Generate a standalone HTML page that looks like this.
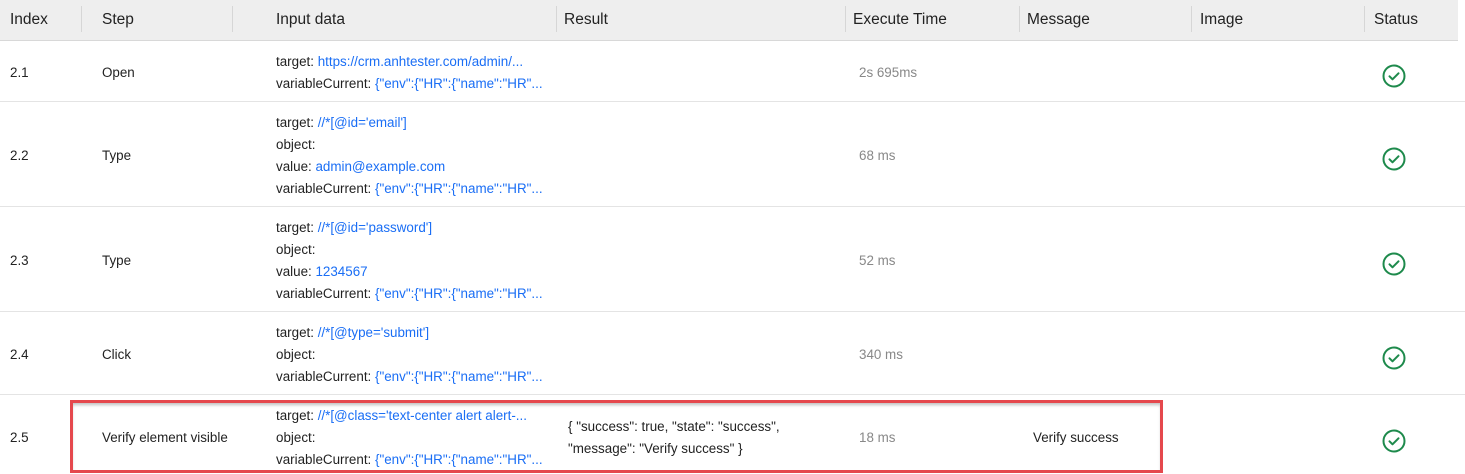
<!DOCTYPE html><html><head><style>
body{margin:0;background:#fff;font-family:"Liberation Sans",sans-serif;width:1465px;height:474px;overflow:hidden;position:relative;color:#222}
.hd{position:absolute;left:0;top:0;width:1458px;height:40px;background:#eeeeee;border-bottom:1px solid #d8d8d8}
.h{position:absolute;top:11px;font-size:15.5px;color:#222}
.sep{position:absolute;top:6px;width:1px;height:26px;background:#d6d6d6}
.line{position:absolute;left:0;width:1465px;height:1px;background:#e4e4e4}
.t{position:absolute;font-size:13.4px;color:#222;white-space:nowrap}
.b{color:#1a6ef5}
.g{color:#888}
.ic{position:absolute;left:1382px;width:24px;height:24px}
.box{position:absolute;left:70px;top:400px;width:1087px;height:67px;border:3px solid #e5484d;box-shadow:inset 0 3px 3px -1px rgba(0,0,0,.25)}
</style></head><body>
<div class="hd"></div>
<div class="h" style="left:10px">Index</div><div class="sep" style="left:81px"></div>
<div class="h" style="left:102px">Step</div><div class="sep" style="left:232px"></div>
<div class="h" style="left:276px">Input data</div><div class="sep" style="left:556px"></div>
<div class="h" style="left:564px">Result</div><div class="sep" style="left:845px"></div>
<div class="h" style="left:853px">Execute Time</div><div class="sep" style="left:1019px"></div>
<div class="h" style="left:1027px">Message</div><div class="sep" style="left:1191px"></div>
<div class="h" style="left:1200px">Image</div><div class="sep" style="left:1364px"></div>
<div class="h" style="left:1374px">Status</div>
<div class="line" style="top:101px"></div><div class="line" style="top:206px"></div><div class="line" style="top:311px"></div><div class="line" style="top:394px"></div>

<div class="t" style="left:10px;top:65px">2.1</div><div class="t" style="left:102px;top:65px">Open</div>
<div class="t" style="left:276px;top:54px">target: <span class="b">https://crm.anhtester.com/admin/...</span></div>
<div class="t" style="left:276px;top:76px">variableCurrent: <span class="b">{"env":{"HR":{"name":"HR"...</span></div>
<div class="t g" style="left:859px;top:65px">2s 695ms</div>

<div class="t" style="left:10px;top:148px">2.2</div><div class="t" style="left:102px;top:148px">Type</div>
<div class="t" style="left:276px;top:115px">target: <span class="b">//*[@id='email']</span></div>
<div class="t" style="left:276px;top:137px">object:</div>
<div class="t" style="left:276px;top:159px">value: <span class="b">admin@example.com</span></div>
<div class="t" style="left:276px;top:181px">variableCurrent: <span class="b">{"env":{"HR":{"name":"HR"...</span></div>
<div class="t g" style="left:859px;top:148px">68 ms</div>

<div class="t" style="left:10px;top:253px">2.3</div><div class="t" style="left:102px;top:253px">Type</div>
<div class="t" style="left:276px;top:220px">target: <span class="b">//*[@id='password']</span></div>
<div class="t" style="left:276px;top:242px">object:</div>
<div class="t" style="left:276px;top:264px">value: <span class="b">1234567</span></div>
<div class="t" style="left:276px;top:286px">variableCurrent: <span class="b">{"env":{"HR":{"name":"HR"...</span></div>
<div class="t g" style="left:859px;top:253px">52 ms</div>

<div class="t" style="left:10px;top:347px">2.4</div><div class="t" style="left:102px;top:347px">Click</div>
<div class="t" style="left:276px;top:325px">target: <span class="b">//*[@type='submit']</span></div>
<div class="t" style="left:276px;top:347px">object:</div>
<div class="t" style="left:276px;top:369px">variableCurrent: <span class="b">{"env":{"HR":{"name":"HR"...</span></div>
<div class="t g" style="left:859px;top:347px">340 ms</div>

<div class="t" style="left:10px;top:430px">2.5</div><div class="t" style="left:102px;top:430px">Verify element visible</div>
<div class="t" style="left:276px;top:408px">target: <span class="b">//*[@class='text-center alert alert-...</span></div>
<div class="t" style="left:276px;top:430px">object:</div>
<div class="t" style="left:276px;top:452px">variableCurrent: <span class="b">{"env":{"HR":{"name":"HR"...</span></div>
<div class="t" style="left:568px;top:419px">{ "success": true, "state": "success",</div>
<div class="t" style="left:568px;top:441px">"message": "Verify success" }</div>
<div class="t g" style="left:859px;top:430px">18 ms</div>
<div class="t" style="left:1033px;top:430px">Verify success</div>
<div class="box"></div>

<svg class="ic" style="top:64px" viewBox="0 0 24 24"><circle cx="12" cy="12" r="10.5" fill="none" stroke="#1e8a4c" stroke-width="2"/><path d="M7.5 12.3l3 3 6-6" fill="none" stroke="#1e8a4c" stroke-width="2" stroke-linecap="round" stroke-linejoin="round"/></svg>
<svg class="ic" style="top:147px" viewBox="0 0 24 24"><circle cx="12" cy="12" r="10.5" fill="none" stroke="#1e8a4c" stroke-width="2"/><path d="M7.5 12.3l3 3 6-6" fill="none" stroke="#1e8a4c" stroke-width="2" stroke-linecap="round" stroke-linejoin="round"/></svg>
<svg class="ic" style="top:252px" viewBox="0 0 24 24"><circle cx="12" cy="12" r="10.5" fill="none" stroke="#1e8a4c" stroke-width="2"/><path d="M7.5 12.3l3 3 6-6" fill="none" stroke="#1e8a4c" stroke-width="2" stroke-linecap="round" stroke-linejoin="round"/></svg>
<svg class="ic" style="top:346px" viewBox="0 0 24 24"><circle cx="12" cy="12" r="10.5" fill="none" stroke="#1e8a4c" stroke-width="2"/><path d="M7.5 12.3l3 3 6-6" fill="none" stroke="#1e8a4c" stroke-width="2" stroke-linecap="round" stroke-linejoin="round"/></svg>
<svg class="ic" style="top:429px" viewBox="0 0 24 24"><circle cx="12" cy="12" r="10.5" fill="none" stroke="#1e8a4c" stroke-width="2"/><path d="M7.5 12.3l3 3 6-6" fill="none" stroke="#1e8a4c" stroke-width="2" stroke-linecap="round" stroke-linejoin="round"/></svg>
</body></html>
